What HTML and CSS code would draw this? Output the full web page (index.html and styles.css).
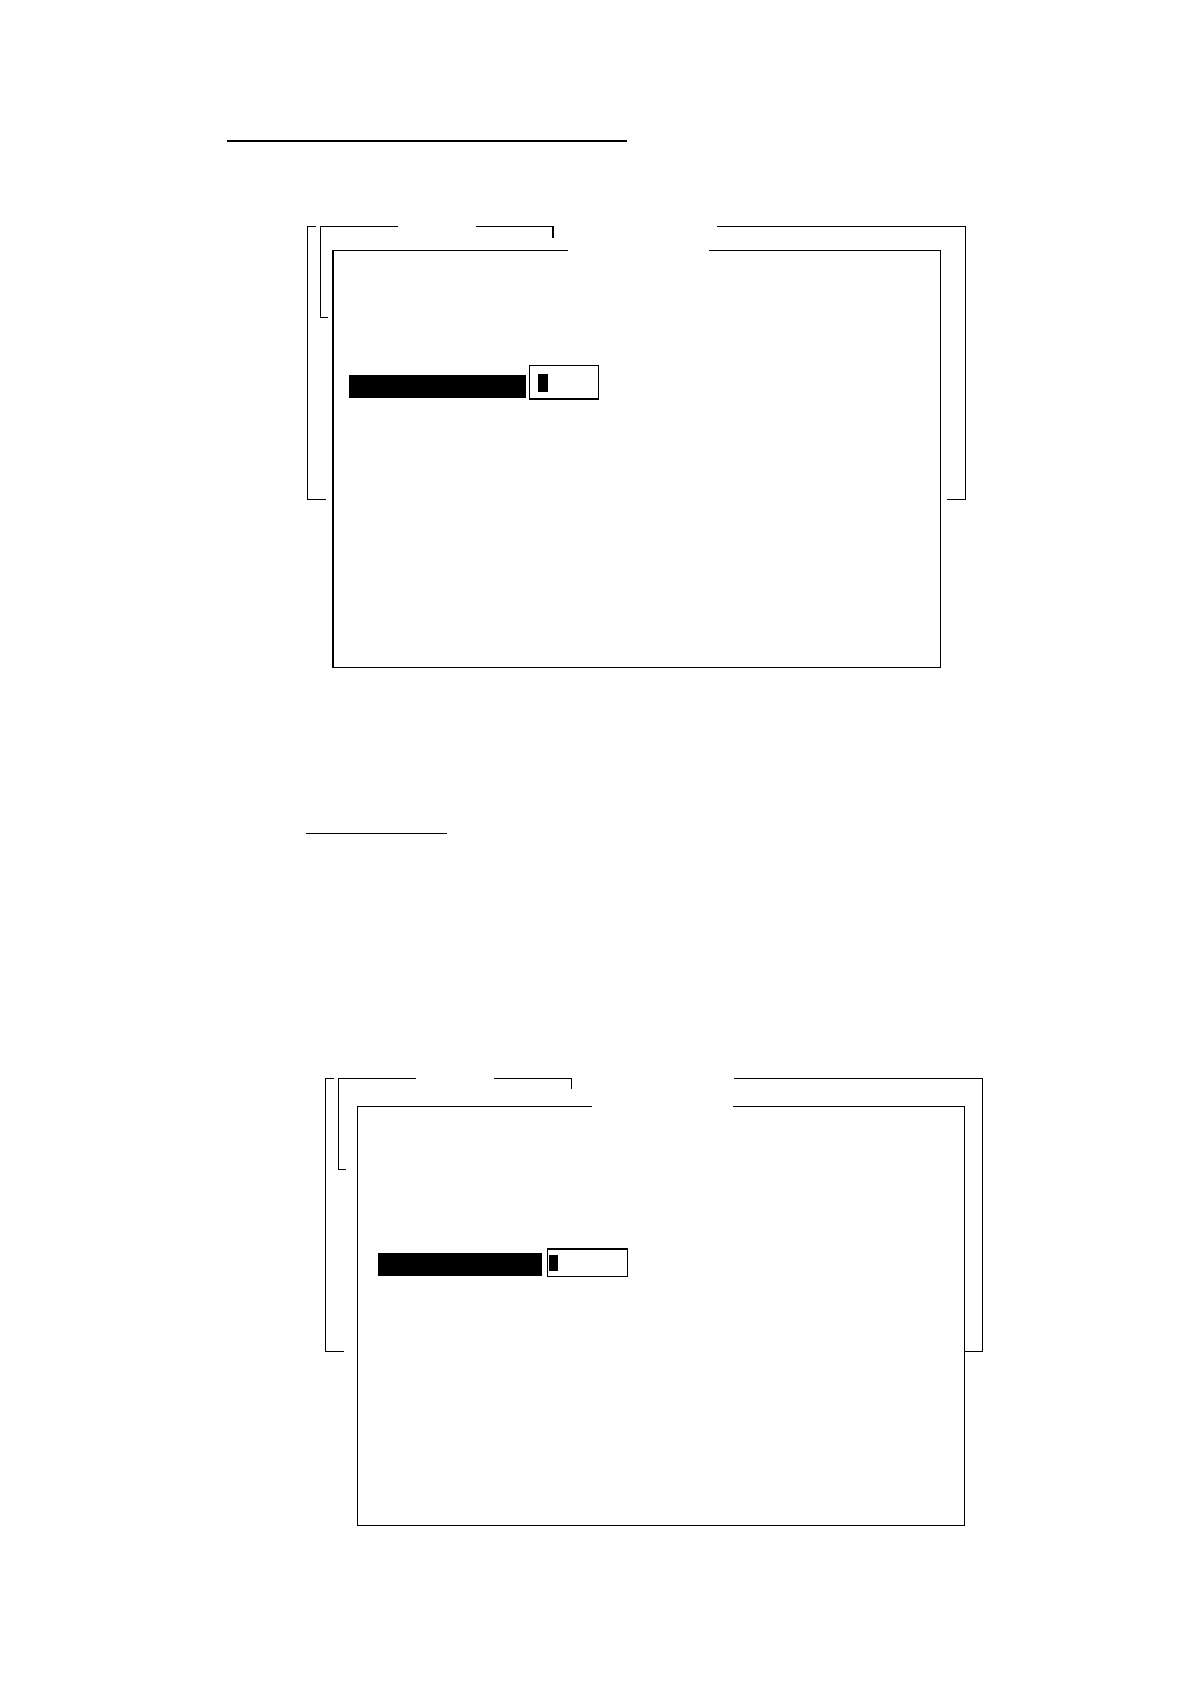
FILE: index.html
```
<!DOCTYPE html>
<html lang="en">
    <head>
        <meta charset="utf-8" />
        <meta name="viewport" content="width=device-width, initial-scale=1" />
        <title>Menu screens</title>
        <link rel="stylesheet" href="styles.css">
    </head>
    <body>
        <hr class="heading-rule" />

        <div class="screen first">
            <div class="window back">
                <div class="edge"><span></span><span></span></div>
                <div class="sides"></div>
                <div class="edge bottom"><span></span><span></span></div>
            </div>
            <div class="window submenu">
                <div class="edge"><span></span><span></span></div>
                <div class="tick"></div>
                <div class="stub"></div>
            </div>
            <div class="window front">
                <div class="edge"><span></span><span></span></div>
                <div class="row">
                    <label class="bar" for="value1"></label>
                    <div class="field">
                        <span class="cursor"></span>
                        <input type="text" id="value1" aria-label="Value" />
                    </div>
                </div>
            </div>
        </div>

        <hr class="section-rule" />

        <div class="screen second">
            <div class="window back">
                <div class="edge"><span></span><span></span></div>
                <div class="sides"></div>
                <div class="edge bottom"><span></span><span></span></div>
            </div>
            <div class="window submenu">
                <div class="edge"><span></span><span></span></div>
                <div class="tick"></div>
                <div class="stub"></div>
            </div>
            <div class="window front">
                <div class="edge"><span></span><span></span></div>
                <div class="row">
                    <label class="bar" for="value2"></label>
                    <div class="field">
                        <span class="cursor"></span>
                        <input type="text" id="value2" aria-label="Value" />
                    </div>
                </div>
            </div>
        </div>
    </body>
</html>
```
FILE: styles.css
```
* {
    box-sizing: border-box;
}
body {
    background-color: #fff;
    font-family: "Liberation Sans", Arial, sans-serif;
    margin: 0;
    padding: 140px 207px 158px 227px;
}

/* Rules */
hr {
    background-color: #000;
    border: 0;
}
.heading-rule {
    height: 2px;
    margin: 0 0 84px;
    width: 400px;
}
.section-rule {
    height: 1px;
    margin: 165px 0 244px 79px;
    width: 141px;
}

/* The windows of a screen share one grid cell */
.screen {
    align-items: start;
    display: grid;
}
.first {
    margin: 0 17px 0 80px;
}
.second {
    margin: 0 0 0 98px;
}
.window {
    display: flex;
    flex-direction: column;
    grid-area: 1 / 1;
}

/* Broken horizontal edges */
.edge {
    display: flex;
    justify-content: space-between;
}
.edge span {
    background-color: #000;
    height: 1px;
    width: 234px;
}

/* Back window */
.back {
    height: 274px;
}
.back .sides {
    border: solid #000;
    border-width: 0 1px;
    flex: 1;
}
.back .edge span:first-child {
    width: 9px;
}
.back .edge span:last-child {
    width: 249px;
}
.back .bottom span:first-child,
.back .bottom span:last-child {
    width: 19px;
}

/* Submenu */
.submenu {
    height: 92px;
    justify-self: start;
    margin-left: 13px;
    width: 234px;
}
.submenu .edge span {
    width: 78px;
}
.submenu .tick {
    border: solid #000;
    border-width: 0 2px 0 1px;
    height: 11px;
}
.submenu .stub {
    border: solid #000;
    border-width: 0 0 1px;
    flex: 1;
    width: 8px;
    border-left-width: 1px;
}
.second .submenu .tick {
    border-right-width: 1px;
    height: 10px;
}

/* Front window */
.front {
    border: solid #000;
    border-width: 0 1px 1px 2px;
    margin: 24px 25px 0;
    min-height: 418px;
}
.front .edge span:last-child {
    width: 231px;
}
.second .front {
    border-left-width: 1px;
    margin: 28px 18px 0 32px;
    min-height: 420px;
}

/* Highlighted entry and its input box */
.row {
    align-items: flex-start;
    display: flex;
    gap: 3px;
    padding: 114px 0 0 15px;
}
.bar {
    background-color: #000;
    height: 23px;
    margin-top: 10px;
    width: 177px;
}
.field {
    border: 1px solid #000;
    border-bottom-width: 2px;
    display: flex;
    height: 35px;
    padding: 8px;
    width: 70px;
}
.cursor {
    background-color: #000;
    flex: none;
    height: 18px;
    width: 10px;
}
.field input {
    background: none;
    border: 0;
    flex: 1;
    height: 18px;
    min-width: 0;
    outline: none;
    padding: 0;
}
.second .row {
    gap: 5px;
    padding: 141px 0 0 20px;
}
.second .bar {
    margin-top: 5px;
    width: 164px;
}
.second .field {
    border-width: 2px 1px 1px;
    height: 29px;
    padding: 5px 1px;
    width: 81px;
}
.second .cursor {
    height: 16px;
    width: 9px;
}
```
